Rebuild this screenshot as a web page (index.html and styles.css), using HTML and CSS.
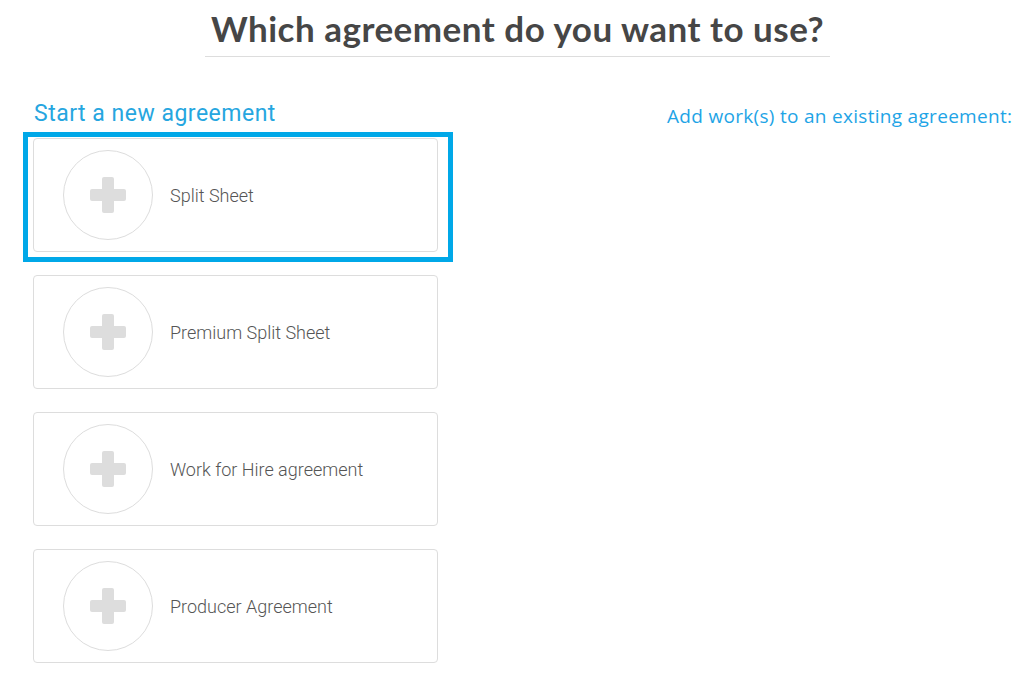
FILE: index.html
```html
<!DOCTYPE html>
<html lang="en">

<head>
    <meta charset="UTF-8">
    <meta name="viewport" content="width=device-width, initial-scale=1.0">
    <title>Choose Agreement</title>
    <link rel="stylesheet" href="styles.css">
</head>

<body>
    <div class="header">
        <h1>Which agreement do you want to use?</h1>
    </div>

    <div class="columns">
        <div class="new-agreement">
            <h2>Start a new agreement</h2>

            <div class="card selected">
                <div class="plus-circle"><span class="plus"></span></div>
                <span class="card-title">Split Sheet</span>
            </div>

            <div class="card">
                <div class="plus-circle"><span class="plus"></span></div>
                <span class="card-title">Premium Split Sheet</span>
            </div>

            <div class="card">
                <div class="plus-circle"><span class="plus"></span></div>
                <span class="card-title">Work for Hire agreement</span>
            </div>

            <div class="card">
                <div class="plus-circle"><span class="plus"></span></div>
                <span class="card-title">Producer Agreement</span>
            </div>
        </div>

        <div class="existing-agreement">
            <h3>Add work(s) to an existing agreement:</h3>
        </div>
    </div>
</body>

</html>
```

FILE: styles.css
```css
body {
    font-family: Roboto, Arial, sans-serif;
    background-color: #fff;
    color: #555;
    margin: 0;
    padding: 0;
}

.header {
    text-align: center;
}

h1 {
    display: inline-block;
    margin: 0;
    padding: 7px 6px 7px;
    line-height: 42px;
    font-family: Lato, sans-serif;
    font-weight: 700;
    font-size: 35px;
    letter-spacing: 0.5px;
    color: #464646;
    border-bottom: 1px solid #ddd;
}

.columns {
    display: grid;
    grid-template-columns: 405px 1fr;
    padding-left: 33px;
    margin-top: 43px;
}

h2 {
    margin: 0 0 11px 1px;
    line-height: 27px;
    font-weight: 400;
    font-size: 23px;
    letter-spacing: 0.5px;
    color: #26a6e0;
}

.card {
    position: relative;
    display: flex;
    align-items: center;
    height: 114px;
    box-sizing: border-box;
    padding-left: 29px;
    margin-bottom: 23px;
    border: 1px solid #ddd;
    border-radius: 4px;
}

/* highlight frame drawn around the chosen card */
.card.selected::after {
    content: "";
    position: absolute;
    left: -11px;
    top: -7px;
    right: -16px;
    bottom: -11px;
    border: 5px solid #00a8e8;
}

.plus-circle {
    position: relative;
    width: 90px;
    height: 90px;
    box-sizing: border-box;
    border: 1px solid #ddd;
    border-radius: 50%;
    flex-shrink: 0;
}

.plus::before,
.plus::after {
    content: "";
    position: absolute;
    background-color: #ddd;
    border-radius: 2px;
}

.plus::before {
    left: 26px;
    top: 38px;
    width: 36px;
    height: 12px;
}

.plus::after {
    left: 38px;
    top: 26px;
    width: 12px;
    height: 36px;
}

.card-title {
    margin-left: 17px;
    font-size: 18px;
    font-weight: 300;
    color: #555;
}

.existing-agreement {
    padding-left: 229px;
}

h3 {
    margin: 3px 0 0;
    line-height: 26px;
    font-family: "Open Sans", sans-serif;
    font-weight: 400;
    font-size: 19px;
    letter-spacing: 0.3px;
    color: #1ea4e6;
}
```
